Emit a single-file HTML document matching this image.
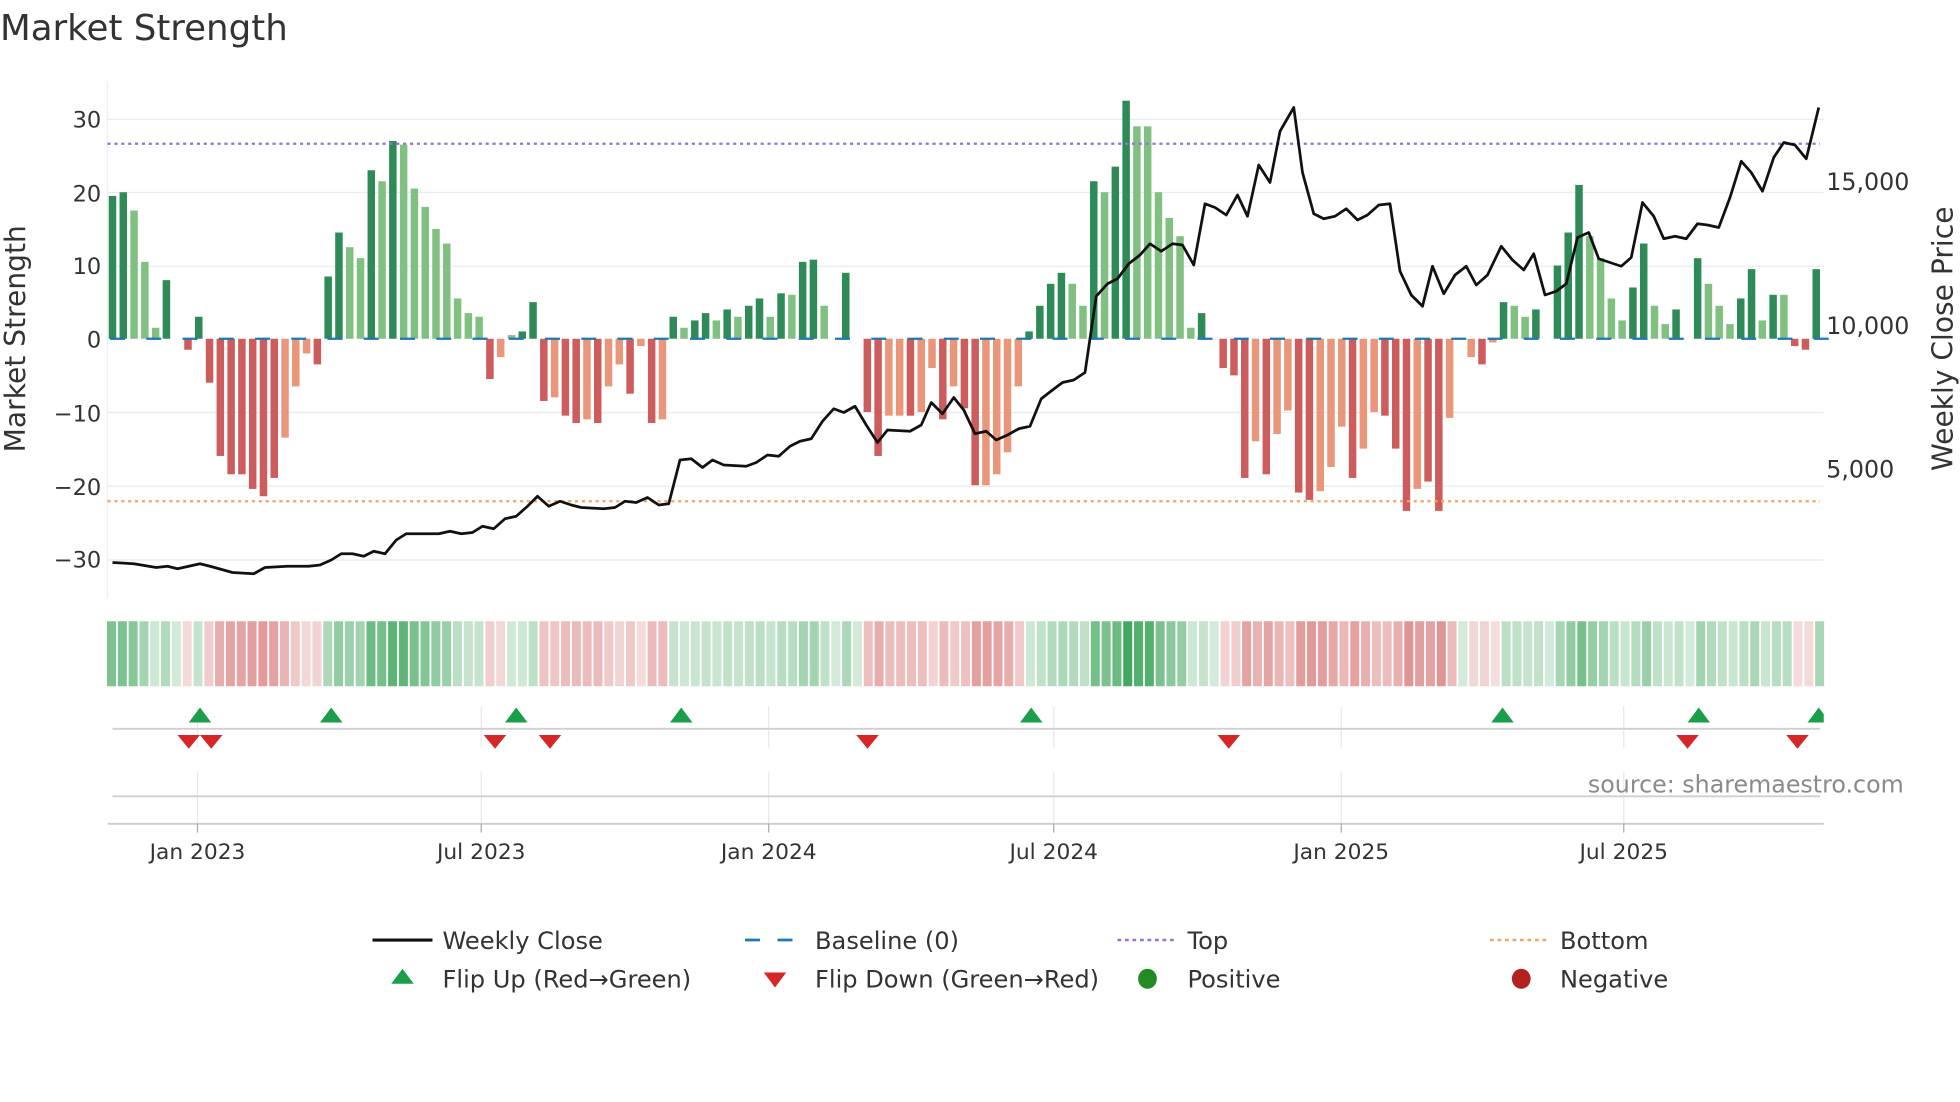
<!DOCTYPE html>
<html><head><meta charset="utf-8"><style>
html,body{margin:0;padding:0;background:#fff;width:1960px;height:1102px;overflow:hidden}
svg text{font-family:"DejaVu Sans","Liberation Sans",sans-serif;fill:#333}
</style></head><body>
<svg id="s" width="1960" height="1102" viewBox="0 0 1568 881.6" xmlns="http://www.w3.org/2000/svg">
<text x="0" y="32" font-size="28.5">Market Strength</text>
<g id="grid" stroke="#e8ebf0" stroke-width="1"></g>
<line x1="86" y1="65" x2="86" y2="478" stroke="#eceef2"/>
<g id="bars"></g>
<line x1="86" y1="115" x2="1456" y2="115" stroke="#9370db" stroke-width="1.8" stroke-dasharray="2.5,3"/>
<line x1="86" y1="401" x2="1456" y2="401" stroke="#f4a460" stroke-width="1.8" stroke-dasharray="2.5,3"/>
<polyline id="price" fill="none" stroke="#111" stroke-width="2.2" stroke-linejoin="round"/>
<g font-size="18" text-anchor="end">
<text x="81" y="102">30</text><text x="81" y="161">20</text><text x="81" y="219">10</text><text x="81" y="278">0</text>
<text x="81" y="337">−10</text><text x="81" y="396">−20</text><text x="81" y="454">−30</text>
</g>
<g font-size="19"><text x="1461" y="152">15,000</text><text x="1461" y="267">10,000</text><text x="1461" y="382">5,000</text></g>
<text transform="translate(20,271) rotate(-90)" font-size="22.5" text-anchor="middle">Market Strength</text>
<text transform="translate(1562,271) rotate(-90)" font-size="22.5" text-anchor="middle">Weekly Close Price</text>
<g id="heat"></g>
<g stroke="#e6e8ee"><line x1="158" y1="565" x2="158" y2="598"/><line x1="385" y1="565" x2="385" y2="598"/><line x1="615" y1="565" x2="615" y2="598"/><line x1="843" y1="565" x2="843" y2="598"/><line x1="1073" y1="565" x2="1073" y2="598"/><line x1="1299" y1="565" x2="1299" y2="598"/>
<line x1="158" y1="617" x2="158" y2="659"/><line x1="385" y1="617" x2="385" y2="659"/><line x1="615" y1="617" x2="615" y2="659"/><line x1="843" y1="617" x2="843" y2="659"/><line x1="1073" y1="617" x2="1073" y2="659"/><line x1="1299" y1="617" x2="1299" y2="659"/></g>
<line x1="90" y1="583" x2="1456" y2="583" stroke="#d0d0d0" stroke-width="1.5"/>
<line x1="90" y1="637" x2="1456" y2="637" stroke="#d0d0d0" stroke-width="1.5"/>
<line x1="86" y1="659" x2="1459" y2="659" stroke="#ccc" stroke-width="1.5"/>
<g stroke="#aaa"><line x1="158" y1="659" x2="158" y2="666"/><line x1="385" y1="659" x2="385" y2="666"/><line x1="615" y1="659" x2="615" y2="666"/><line x1="843" y1="659" x2="843" y2="666"/><line x1="1073" y1="659" x2="1073" y2="666"/><line x1="1299" y1="659" x2="1299" y2="666"/></g>
<svg x="0" y="0" width="1459" height="700" overflow="hidden"><g id="marks"></g></svg>
<text x="1523" y="634" font-size="19" text-anchor="end" style="fill:#8a8a8a">source: sharemaestro.com</text>
<g font-size="17.4" text-anchor="middle"><text x="158" y="687">Jan 2023</text><text x="385" y="687">Jul 2023</text><text x="615" y="687">Jan 2024</text><text x="843" y="687">Jul 2024</text><text x="1073" y="687">Jan 2025</text><text x="1299" y="687">Jul 2025</text></g>
<g font-size="19.3">
<line x1="298" y1="752" x2="346" y2="752" stroke="#111" stroke-width="2.5"/><text x="354" y="759">Weekly Close</text>
<line x1="596" y1="752" x2="644" y2="752" stroke="#1f77b4" stroke-width="2.2" stroke-dasharray="12,14"/><text x="652" y="759">Baseline (0)</text>
<line x1="894" y1="752" x2="940" y2="752" stroke="#9370db" stroke-width="2" stroke-dasharray="3,3"/><text x="950" y="759">Top</text>
<line x1="1192" y1="752" x2="1238" y2="752" stroke="#f4a460" stroke-width="2" stroke-dasharray="3,3"/><text x="1248" y="759">Bottom</text>
<polygon points="322,775 313,787 331,787" fill="#1a9e4a"/><text x="354" y="790">Flip Up (Red→Green)</text>
<polygon points="611,778 629,778 620,790" fill="#d62728"/><text x="652" y="790">Flip Down (Green→Red)</text>
<ellipse cx="918" cy="783" rx="7.5" ry="8" fill="#228b22"/><text x="950" y="790">Positive</text>
<ellipse cx="1217" cy="783" rx="7.5" ry="8" fill="#b22222"/><text x="1248" y="790">Negative</text>
</g>
</svg>
<script>
var NS="http://www.w3.org/2000/svg";
function el(t,a,p){var e=document.createElementNS(NS,t);for(var k in a)e.setAttribute(k,a[k]);document.getElementById(p).appendChild(e);return e;}
[95.5,154,213,330,389,448].forEach(function(y){el('line',{x1:86,x2:1459,y1:y,y2:y},'grid');});
var D=[[19.5,1],[20,1],[17.5,0],[10.5,0],[1.5,0],[8,1],[0,1],[-1.5,1],[3,1],[-6,1],[-16,1],[-18.5,1],[-18.5,1],[-20.5,1],[-21.5,1],[-19,1],[-13.5,0],[-6.5,0],[-2,0],[-3.5,1],
[8.5,1],[14.5,1],[12.5,0],[11,0],[23,1],[21.5,0],[27,1],[26.5,0],[20.5,0],[18,0],[15,0],[13,0],[5.5,0],[3.5,0],[3,0],[-5.5,1],[-2.5,0],[0.5,0],[1,1],[5,1],
[-8.5,1],[-8,0],[-10.5,1],[-11.5,1],[-11,0],[-11.5,1],[-6.5,0],[-3.5,0],[-7.5,1],[-1,0],[-11.5,1],[-11,0],[3,1],[1.5,0],[2.5,1],[3.5,1],[2.5,0],[4,1],[3,0],[4.5,1],
[5.5,1],[3,0],[6.2,1],[6,0],[10.5,1],[10.8,1],[4.5,0],[0,1],[9,1],[0,1],[-10,1],[-16,1],[-10.5,0],[-10.5,0],[-10.5,1],[-10,0],[-4,0],[-11,1],[-6.5,0],[-9.5,1],
[-20,1],[-20,0],[-18.5,0],[-15.5,0],[-6.5,0],[1,1],[4.5,1],[7.5,1],[9,1],[7.5,0],[4.5,0],[21.5,1],[20,0],[23.5,1],[32.5,1],[29,0],[29,0],[20,0],[16.5,0],[14,0],
[1.5,0],[3.5,1],[0,1],[-4,1],[-5,1],[-19,1],[-14,0],[-18.5,1],[-13,0],[-9.8,0],[-21,1],[-22,1],[-20.8,0],[-17.5,0],[-12,0],[-19,1],[-15,0],[-10,0],[-10.5,1],[-15,1],
[-23.5,1],[-20.5,0],[-19.5,1],[-23.5,1],[-10.8,0],[0,1],[-2.5,0],[-3.5,1],[-0.5,0],[5,1],[4.5,0],[3,0],[4,1],[0,1],[10,1],[14.5,1],[21,1],[14,0],[11,0],[5.5,0],
[2.5,0],[7,1],[13,1],[4.5,0],[2,0],[4,1],[0,1],[11,1],[7.5,0],[4.5,0],[2,0],[5.5,1],[9.5,1],[2.5,0],[6,1],[6,0],[-1,1],[-1.5,1],[9.5,1]];
var n=D.length,x0=90,dx=(1453-90)/(n-1),zy=271,s=5.86;
var hx=(1456-89.5)/(n-1);
D.forEach(function(d,i){var x=x0+i*dx,v=d[0],h=Math.abs(v)*s;
 var c=v>=0?(d[1]?'#2e8b57':'#80c080'):(d[1]?'#cd5c5c':'#e9967a');
 if(Math.abs(v)>0.2)el('rect',{x:x-3,y:v>0?zy-h:zy,width:6,height:h,fill:c},'bars');
 var a=0.22+0.7*Math.min(Math.abs(v),33)/33;
 var hc=v>=0?'rgba(50,160,80,'+a+')':'rgba(205,80,80,'+(a*0.85)+')';
 el('rect',{x:89.5+i*hx-3.9,y:497,width:7.2,height:52,fill:hc},'heat');
});
for(var xx=88;xx<1458;xx+=29){el('line',{x1:xx,x2:xx+12,y1:271,y2:271,stroke:'#1f77b4','stroke-width':1.8},'bars');}
var P=[[90,450],[107,451],[125,454],[134,453],[142,455],[160,451],[168,453],[186,458],[203,459],[212,454],[230,453],[247,453],[256,452],[265,448],[273,443],[282,443],[291,445],[299,441],[308,443],[317,432],[325,427],[334,427],[351,427],[360,425],[369,427],[378,426],[386,421],[395,423],[404,415],[413,413],[422,405],[430,397],[439,405],[448,401],[457,404],[465,406],[483,407],[492,406],[500,401],[509,402],[518,398],[527,404],[535,403],[544,368],[553,367],[562,374],[570,368],[579,372],[597,373],[605,370],[614,364],[623,365],[632,357],[640,353],[649,351],[658,337],[667,327],[675,330],[684,325],[693,340],[702,354],[710,344],[728,345],[737,340],[745,322],[754,331],[763,318],[771,328],[780,347],[789,345],[797,352],[806,348],[815,343],[824,341],[833,319],[842,312],[850,306],[859,304],[868,298],[877,237],[886,227],[894,223],[903,211],[912,204],[920,195],[929,201],[938,195],[946,196],[955,212],[964,163],[972,166],[981,172],[990,156],[998,173],[1007,132],[1016,146],[1024,105],[1035,86],[1042,138],[1051,171],[1059,175],[1068,173],[1077,167],[1086,176],[1094,172],[1103,164],[1112,163],[1120,217],[1129,236],[1138,245],[1146,213],[1155,235],[1164,220],[1173,213],[1181,228],[1190,220],[1201,197],[1210,208],[1219,216],[1227,203],[1236,236],[1245,233],[1253,227],[1262,190],[1271,186],[1279,207],[1288,210],[1297,213],[1305,206],[1314,162],[1323,173],[1331,191],[1340,189],[1349,191],[1358,179],[1366,180],[1375,182],[1384,158],[1393,129],[1401,138],[1410,153],[1419,126],[1427,114],[1436,116],[1445,127],[1455,86]];
document.getElementById('price').setAttribute('points',P.map(function(p){return p.join(',')}).join(' '));
[160,265,413,545,825,1202,1359,1455].forEach(function(x){el('polygon',{points:(x)+',566 '+(x-9)+',578 '+(x+9)+',578',fill:'#1a9e4a'},'marks');});
[151,169,396,440,694,983,1350,1438].forEach(function(x){el('polygon',{points:(x-9)+',588 '+(x+9)+',588 '+x+',599',fill:'#d62728'},'marks');});
</script>
</body></html>
